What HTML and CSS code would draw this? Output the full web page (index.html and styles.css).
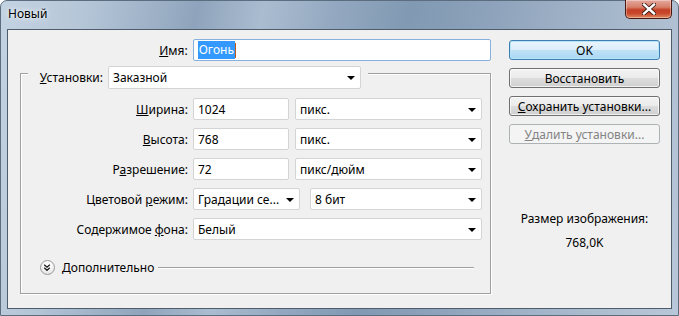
FILE: index.html
```html
<!DOCTYPE html>
<html lang="ru">
<head>
<meta charset="utf-8">
<title>Новый</title>
<link rel="stylesheet" href="styles.css">
</head>
<body>
<div class="window">
  <div class="titlebar">
    <span class="title">Новый</span>
    <div class="close">
      <svg width="14" height="12" viewBox="0 0 14 12">
        <path d="M2 1.5 L12 10.5 M12 1.5 L2 10.5" stroke="#3a1a14" stroke-width="4.2" stroke-linecap="square"/>
        <path d="M2 1.5 L12 10.5 M12 1.5 L2 10.5" stroke="#ffffff" stroke-width="2.4" stroke-linecap="square"/>
      </svg>
    </div>
  </div>
  <div class="client">
    <div class="left">
      <div class="row name-row">
        <span class="lbl lbl-name"><u>И</u>мя:</span>
        <div class="input focus"><span class="sel">Огонь</span><span class="caret"></span></div>
      </div>
      <div class="group">
        <div class="legend">
          <span class="lbl lbl-legend"><u>У</u>становки:</span>
          <div class="select w-preset">Заказной<i class="arrow"></i></div>
        </div>
        <div class="row first">
          <span class="lbl"><u>Ш</u>ирина:</span>
          <div class="input w-num">1024</div>
          <div class="select w-unit">пикс.<i class="arrow"></i></div>
        </div>
        <div class="row">
          <span class="lbl"><u>В</u>ысота:</span>
          <div class="input w-num">768</div>
          <div class="select w-unit">пикс.<i class="arrow"></i></div>
        </div>
        <div class="row">
          <span class="lbl">Р<u>а</u>зрешение:</span>
          <div class="input w-num">72</div>
          <div class="select w-unit">пикс/дюйм<i class="arrow"></i></div>
        </div>
        <div class="row">
          <span class="lbl">Цветовой <u>р</u>ежим:</span>
          <div class="select w-mode">Градации се...<i class="arrow"></i></div>
          <div class="select w-bits">8 бит<i class="arrow"></i></div>
        </div>
        <div class="row">
          <span class="lbl">Содержимое <u>ф</u>она:</span>
          <div class="select w-bg">Белый<i class="arrow"></i></div>
        </div>
        <div class="advanced">
          <span class="expander">
            <svg width="15" height="15" viewBox="0 0 15 15">
              <path d="M4.5 4.5 L7.5 7.2 L10.5 4.5 M4.5 7.8 L7.5 10.5 L10.5 7.8" fill="none" stroke="#1d1d1d" stroke-width="1.4"/>
            </svg>
          </span>
          <span class="adv-text">Дополнительно</span>
          <span class="adv-line"></span>
        </div>
      </div>
    </div>
    <div class="side">
      <div class="btn default">OK</div>
      <div class="btn">Восстановить</div>
      <div class="btn"><u>С</u>охранить установки...</div>
      <div class="btn disabled"><u>У</u>далить установки...</div>
      <div class="size">
        <div>Размер изображения:</div>
        <div class="size-val">768,0K</div>
      </div>
    </div>
  </div>
</div>
</body>
</html>
```
FILE: styles.css
```css
* { box-sizing: border-box; }
html, body { margin: 0; padding: 0; background: #fff; }
body { font-family: "Noto Sans", "DejaVu Sans", sans-serif; font-size: 12px; color: #000; }

.window {
  width: 679px;
  height: 316px;
  border: 1px solid #5d6d80;
  border-radius: 7px 7px 0 0;
  padding: 0 6px 6px 6px;
  display: flex;
  flex-direction: column;
  background: linear-gradient(100deg, #c4d3e2 0%, #b4c5d7 12%, #8fa4bc 27%, #aabcd0 36%, #93a8c0 46%, #8199b3 56%, #8ca1ba 66%, #a1b3c8 80%, #b9c8d8 100%);
}

.titlebar {
  height: 28px;
  display: flex;
  justify-content: space-between;
  align-items: flex-start;
}
.title {
  margin: 4px 0 0 1px;
  font-size: 12px;
  color: #000;
  text-shadow: 0 0 6px rgba(255,255,255,0.9), 0 0 3px rgba(255,255,255,0.8);
}
.close {
  width: 47px;
  height: 19px;
  margin-top: -1px;
  border: 1px solid #4a1a12;
  border-top: none;
  border-radius: 0 0 5px 5px;
  background: linear-gradient(#e5a89c 0%, #d77f6a 40%, #c33f25 55%, #c9492c 75%, #dd8a63 100%);
  box-shadow: inset 0 0 0 1px rgba(255,255,255,0.35);
  display: flex;
  align-items: center;
  justify-content: center;
}

.client {
  flex: 1;
  border: 1px solid #4e5c6b;
  background: #f0f0f0;
  display: flex;
  gap: 18px;
}

.left {
  width: 483px;
  padding: 9px 0 0 12px;
}

.row {
  display: flex;
  align-items: center;
  height: 22px;
  margin-top: 8px;
}
.lbl {
  width: 167px;
  margin-right: 5px;
  text-align: right;
  white-space: nowrap;
}
.name-row { margin-top: 0; }
.lbl-name { width: 168px; }

.input, .select {
  height: 22px;
  background: #fff;
  border: 1px solid #d4d4d4;
  border-radius: 2px;
  display: flex;
  align-items: center;
  padding-left: 4px;
  position: relative;
  white-space: nowrap;
}
.input.focus {
  width: 299px;
  border-color: #86b1dd;
}
.sel { background: #3399ff; color: #fff; padding: 0 1px 1px 1px; }
.caret { width: 1px; height: 15px; background: #c05a1c; }

.arrow {
  position: absolute;
  right: 5px;
  top: 9px;
  width: 0; height: 0;
  border-left: 4px solid transparent;
  border-right: 4px solid transparent;
  border-top: 4px solid #000;
}

.w-num { width: 96px; margin-right: 6px; }
.w-unit { width: 187px; }
.w-mode { width: 107px; margin-right: 10px; }
.w-bits { width: 172px; }
.w-bg { width: 289px; }
.w-preset { width: 253px; height: 23px; }

.group {
  margin-top: 12px;
  width: 471px;
  height: 221px;
  border: 1px solid #a0a0a0;
  box-shadow: inset 1px 1px 0 #fff, 1px 1px 0 #fff;
}
.legend {
  position: relative;
  display: flex;
  align-items: center;
  width: 340px;
  margin: -8px 0 0 7px;
  padding-right: 7px;
  background: #f0f0f0;
}
.lbl-legend { width: 75px; }
.row.first { margin-top: 9px; }

.advanced {
  display: flex;
  align-items: center;
  height: 16px;
  margin: 19px 16px 0 19px;
}
.expander {
  width: 15px;
  height: 15px;
  border-radius: 50%;
  border: 1px solid #9a9a9a;
  background: radial-gradient(circle at 50% 35%, #ffffff 0%, #f4f4f4 50%, #d6d6d6 100%);
  display: flex;
}
.expander svg { margin: -1px 0 0 -1px; }
.adv-text { margin-left: 7px; }
.adv-line {
  flex: 1;
  height: 1px;
  margin-left: 4px;
  background: #a0a0a0;
  box-shadow: 0 1px 0 #fff;
}

.side {
  width: 151px;
  padding-top: 10px;
  display: flex;
  flex-direction: column;
  gap: 8px;
}
.btn {
  height: 20px;
  border: 1px solid #707070;
  border-radius: 3px;
  background: linear-gradient(#f3f3f3 0%, #ebebeb 48%, #dddddd 52%, #cfcfcf 100%);
  box-shadow: inset 0 0 0 1px rgba(255,255,255,0.7);
  display: flex;
  align-items: center;
  justify-content: center;
  white-space: nowrap;
}
.btn.default {
  border-color: #3c7fb1;
  background: linear-gradient(#e9f5fc 0%, #dbeefa 48%, #bfe2f7 52%, #a9d7f3 100%);
  box-shadow: inset 0 0 0 1px #b6e3f9;
}
.btn.disabled {
  border-color: #adb2b5;
  background: #f4f4f4;
  box-shadow: none;
  color: #838383;
}
.size {
  margin-top: 59px;
  text-align: center;
  line-height: 16px;
}
.size-val { margin-top: 8px; }
```
